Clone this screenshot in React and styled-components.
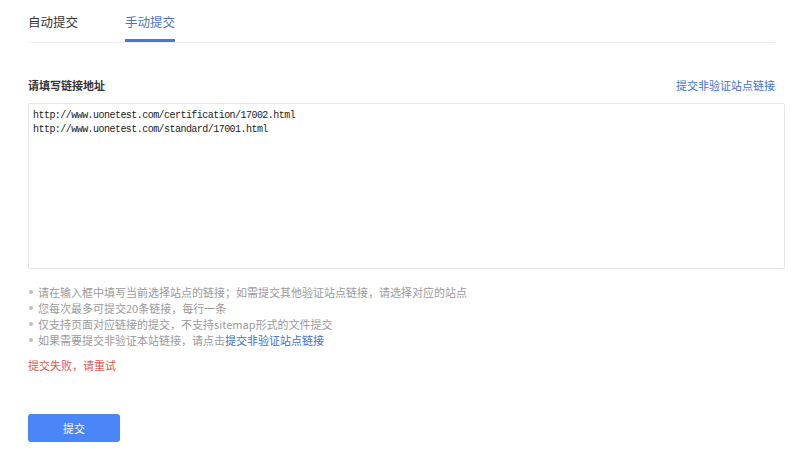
import React from "react";
import styled, { createGlobalStyle } from "styled-components";

const GlobalStyle = createGlobalStyle`
  body {
    margin: 0;
    background: #fff;
    font-family: "Noto Sans CJK SC", "Liberation Sans", sans-serif;
  }
`;

const Page = styled.div`
  width: 800px;
  height: 463px;
  padding-left: 28px;
  box-sizing: border-box;
  overflow: hidden;
`;

const TabBar = styled.div`
  display: flex;
  gap: 47px;
  width: 747px;
  height: 43px;
  box-sizing: border-box;
  border-bottom: 1px solid #efefef;
`;

const Tab = styled.div`
  height: 42px;
  box-sizing: border-box;
  padding-top: 13px;
  font-size: 12.5px;
  line-height: 17px;
  color: ${(p) => (p.$active ? "#4c72cc" : "#333")};
  border-bottom: 3px solid ${(p) => (p.$active ? "#4c78d4" : "transparent")};
  margin-bottom: -1px;
  cursor: pointer;
`;

const LabelRow = styled.div`
  display: flex;
  justify-content: space-between;
  align-items: center;
  width: 747px;
  margin-top: 34px;
  line-height: 16px;
`;

const Label = styled.div`
  font-size: 11px;
  font-weight: bold;
  color: #333;
`;

const Link = styled.a`
  font-size: 11px;
  color: #3e6fd4;
  text-decoration: none;
  cursor: pointer;
`;

const UrlInput = styled.textarea`
  display: block;
  width: 757px;
  height: 166px;
  margin-top: 10px;
  box-sizing: border-box;
  padding: 5px 4px;
  border: 1px solid #e6e6e6;
  border-radius: 2px;
  resize: none;
  outline: none;
  font-family: "Liberation Mono", monospace;
  font-size: 10px;
  letter-spacing: -0.54px;
  line-height: 14px;
  color: #222;
`;

const Tips = styled.ul`
  list-style: none;
  margin: 15px 0 0;
  padding: 0;
`;

const Tip = styled.li`
  display: flex;
  align-items: center;
  font-size: 11px;
  line-height: 16px;
  color: #9a9a9a;

  &::before {
    content: "";
    width: 4px;
    height: 4px;
    margin: 0 5px 0 1px;
    border-radius: 50%;
    background: #bdbdbd;
  }
`;

const Error = styled.div`
  margin-top: 9px;
  font-size: 11px;
  line-height: 16px;
  color: #e05550;
`;

const SubmitButton = styled.button`
  display: block;
  margin-top: 41px;
  width: 92px;
  height: 28px;
  border: none;
  border-radius: 3px;
  background: #4a86f7;
  color: #fff;
  font-family: inherit;
  font-size: 11px;
  cursor: pointer;
`;

const urls = [
  "http://www.uonetest.com/certification/17002.html",
  "http://www.uonetest.com/standard/17001.html",
].join("\n");

export default function App() {
  return (
    <Page>
      <GlobalStyle />
      <TabBar>
        <Tab>自动提交</Tab>
        <Tab $active>手动提交</Tab>
      </TabBar>
      <LabelRow>
        <Label>请填写链接地址</Label>
        <Link>提交非验证站点链接</Link>
      </LabelRow>
      <UrlInput defaultValue={urls} spellCheck={false} />
      <Tips>
        <Tip>请在输入框中填写当前选择站点的链接；如需提交其他验证站点链接，请选择对应的站点</Tip>
        <Tip>您每次最多可提交20条链接，每行一条</Tip>
        <Tip>仅支持页面对应链接的提交，不支持sitemap形式的文件提交</Tip>
        <Tip>
          如果需要提交非验证本站链接，请点击<Link>提交非验证站点链接</Link>
        </Tip>
      </Tips>
      <Error>提交失败，请重试</Error>
      <SubmitButton>提交</SubmitButton>
    </Page>
  );
}
